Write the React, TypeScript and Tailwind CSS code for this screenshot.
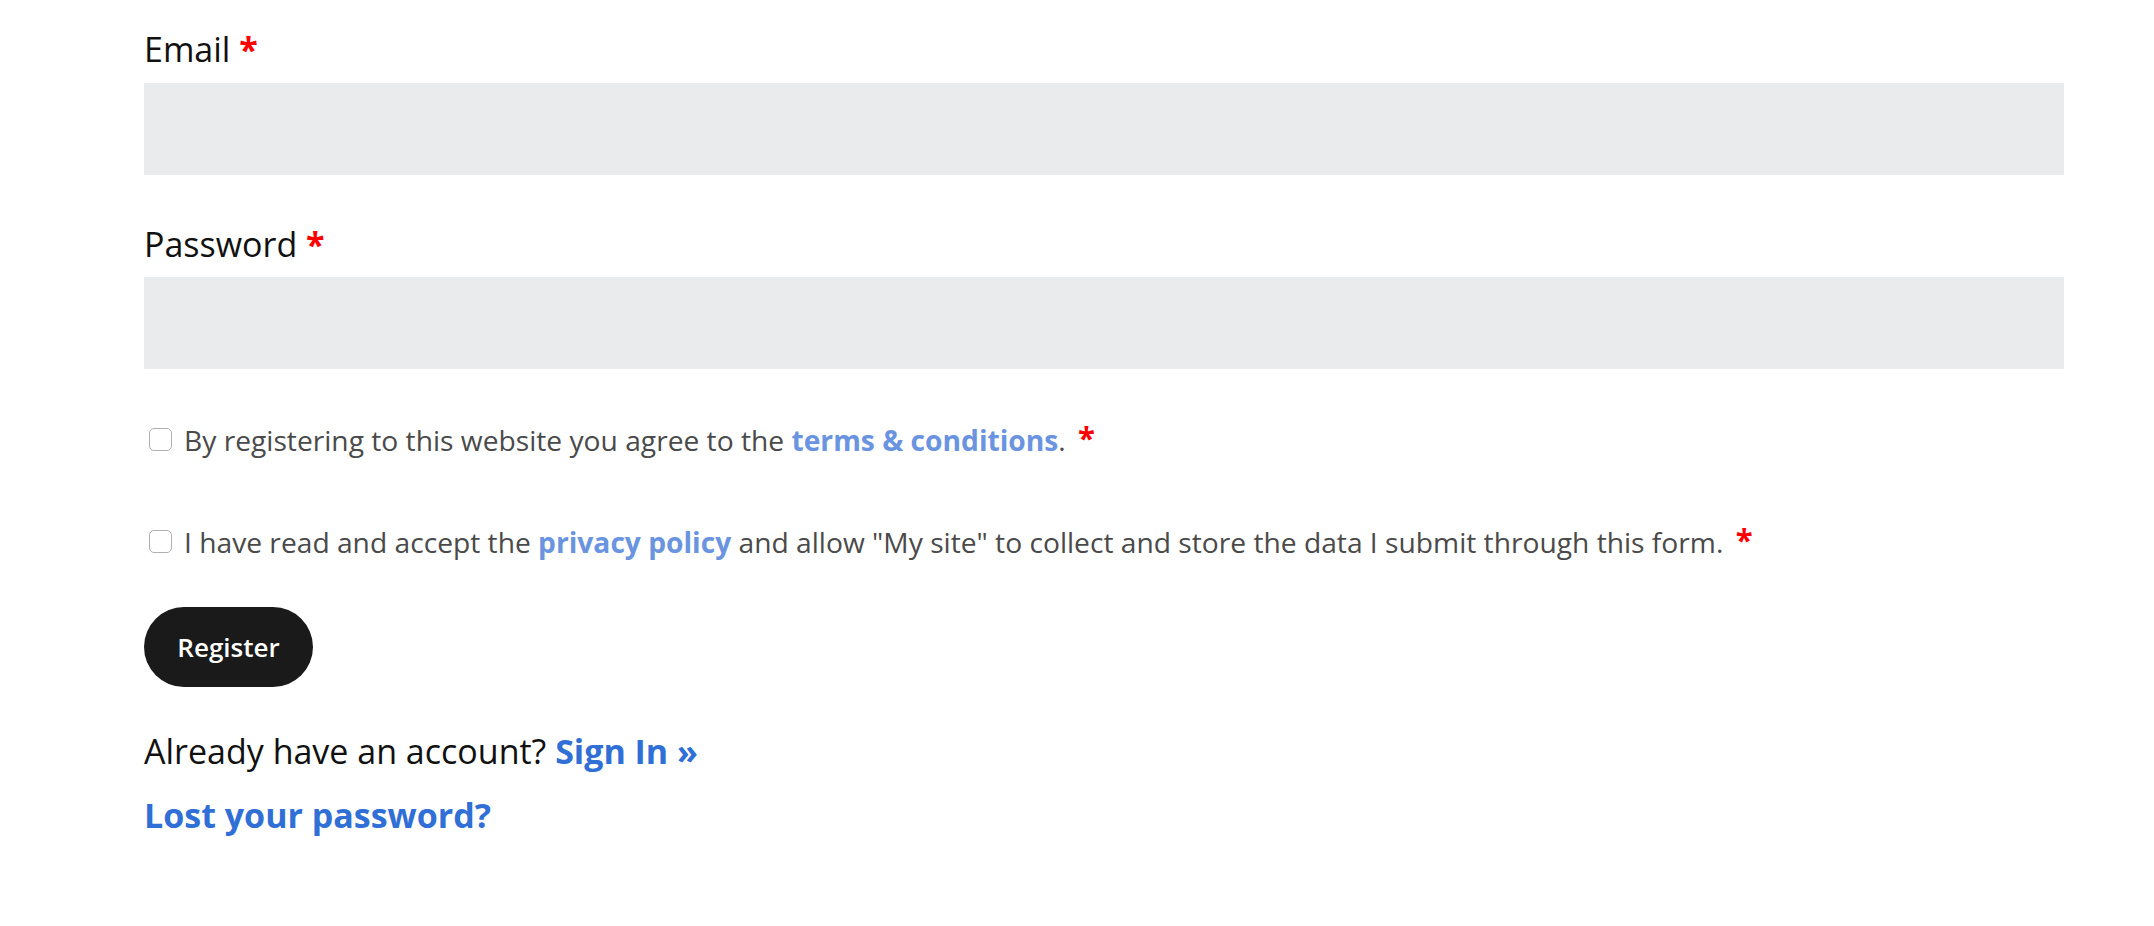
export default function App() {
  return (
    <div className="min-h-screen bg-white font-['Open_Sans',sans-serif] pl-[144px] pt-[29px]">
      <form className="w-[1920px] flex flex-col" onSubmit={(e) => e.preventDefault()}>
        <label className="text-[34px] leading-[40px] text-[#111]">
          Email <span className="text-[#ff0000] font-bold">*</span>
        </label>
        <input type="email" className="mt-[14px] h-[92px] w-full bg-[#eaebed] outline-none px-4 text-[26px]" />

        <label className="mt-[49px] text-[34px] leading-[40px] text-[#111]">
          Password <span className="text-[#ff0000] font-bold">*</span>
        </label>
        <input type="password" className="mt-[13px] h-[92px] w-full bg-[#eaebed] outline-none px-4 text-[26px]" />

        <div className="mt-[50px] flex items-center h-[40px] pl-[5px] text-[28.2px] text-[#4a4a4a]">
          <input type="checkbox" className="appearance-none w-[23px] h-[23px] shrink-0 border border-[#b0b0b0] rounded-[5px] bg-white" />
          <span className="ml-[12px] whitespace-nowrap">
            By registering to this website you agree to the{" "}
            <a href="#" className="font-bold text-[#6a94e0]">terms &amp; conditions</a>.{" "}
            <span className="ml-[5px] text-[31px] font-bold text-[#ff0000] relative top-[-2px]">*</span>
          </span>
        </div>

        <div className="mt-[62px] flex items-center h-[40px] pl-[5px] text-[28.2px] text-[#4a4a4a]">
          <input type="checkbox" className="appearance-none w-[23px] h-[23px] shrink-0 border border-[#b0b0b0] rounded-[5px] bg-white" />
          <span className="ml-[12px] whitespace-nowrap">
            I have read and accept the{" "}
            <a href="#" className="font-bold text-[#6a94e0]">privacy policy</a> and allow "My site" to collect and store the data I submit through this form.{" "}
            <span className="ml-[5px] text-[31px] font-bold text-[#ff0000] relative top-[-2px]">*</span>
          </span>
        </div>

        <div className="mt-[46px]">
          <button type="submit" className="h-[80px] w-[169px] rounded-full bg-[#1a1a1a] text-white text-[26px] font-semibold">
            Register
          </button>
        </div>

        <p className="mt-[42px] text-[34px] leading-[44px] text-[#111]">
          Already have an account?{" "}
          <a href="#" className="font-bold text-[#2f6fd6]">Sign In »</a>
        </p>
        <p className="mt-[20px] text-[34px] leading-[44px]">
          <a href="#" className="font-bold text-[#2f6fd6]">Lost your password?</a>
        </p>
      </form>
    </div>
  )
}
